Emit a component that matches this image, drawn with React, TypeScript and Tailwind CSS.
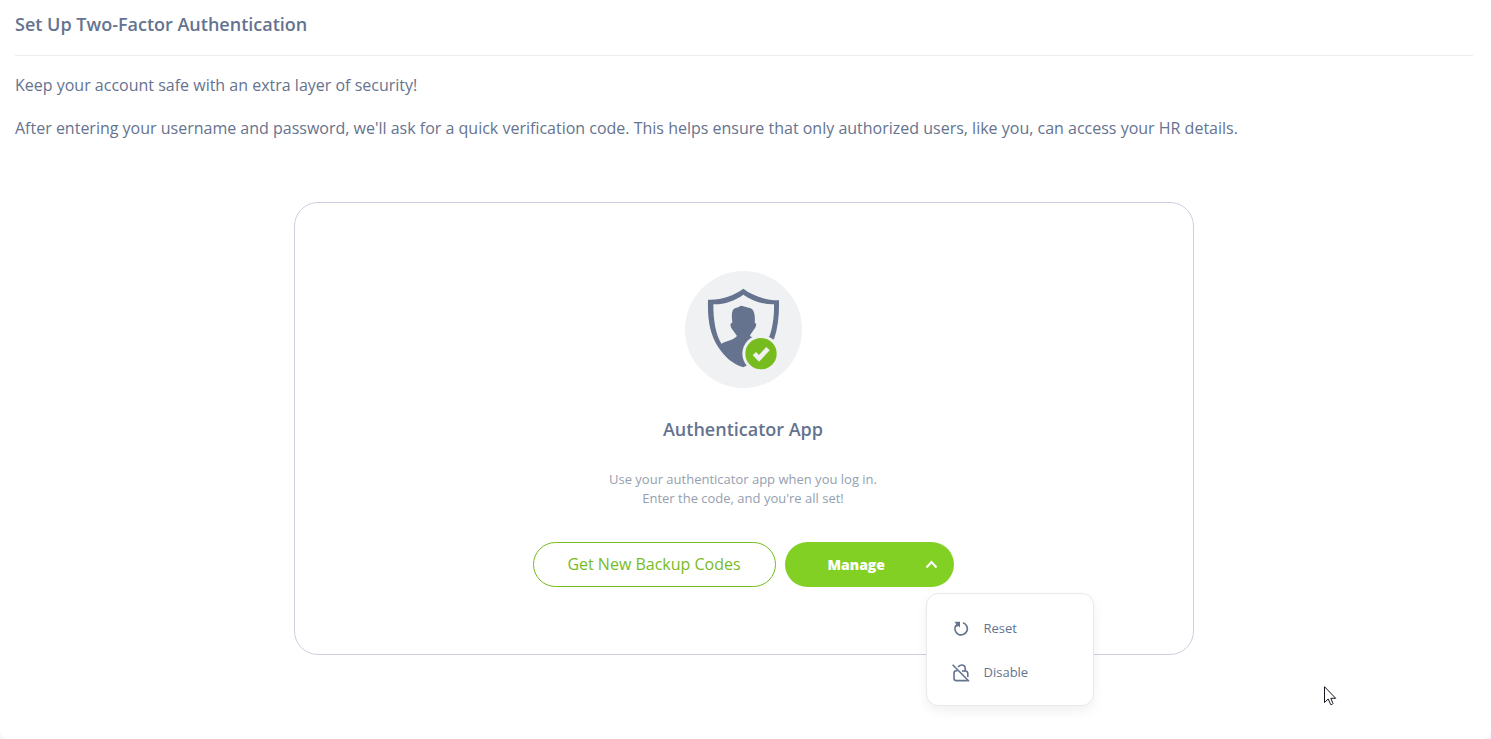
import { useState } from "react";

function ShieldIcon() {
  return (
    <svg viewBox="45 33 351 351" className="size-[117px]" aria-hidden="true">
      <circle cx="220.5" cy="208.5" r="175.5" fill="#eff1f3" />
      <path
        fill="#65738f"
        fillRule="evenodd"
        d="M220 86C190 108 152 121 114 119C112 178 120 222 143 259C163 291 189 313 220 322L243 310L290 245L312 238C324 202 328 164 327 121C289 122 250 108 220 86ZM220 104C193 123 162 134 130 133C130 182 137 222 154 251C168 244 189 241 201 228L186 207C182 202 180 194 183 190L187 188C185 171 184 155 191 147C198 141 207 143 212 137C223 139 234 142 242 145C254 150 256 171 254 188C261 190 259 200 253 207L240 226C241 230 245 232 250 234L298 230C308 203 313 166 312 133C280 134 247 123 220 104Z"
      />
      <circle cx="273" cy="281" r="56" fill="#eff1f3" />
      <circle cx="273" cy="281" r="47" fill="#77bc1f" />
      <path d="M253 281L267 295L294 266" fill="none" stroke="#eff1f3" strokeWidth="14" />
    </svg>
  );
}

function ResetIcon() {
  return (
    <svg viewBox="0 0 18 18" className="size-[18px]" fill="none" aria-hidden="true">
      <path d="M11 2.8A6.2 6.2 0 1 1 4 5.2" stroke="#65738f" strokeWidth="1.7" />
      <path d="M2.3 1.8H8V7.6L6.2 5.9L4.8 7L3.4 5.6L4.3 4Z" fill="#65738f" />
    </svg>
  );
}

function DisableIcon() {
  return (
    <svg viewBox="0 0 18 18" className="size-[18px]" fill="none" stroke="#65738f" strokeWidth="1.6" aria-hidden="true">
      <path d="M.6 .8L17 17.2" />
      <path d="M5.5 6.8H4.4Q2 6.8 2 9.2V14.2Q2 16.6 4.4 16.6H15.8" />
      <path d="M6.2 3.2Q7.2 1 9.6 1Q13.2 1 13.2 4.6V6.8Q15.8 7.2 15.8 9.6V13" />
      <path d="M10 7H13.2" />
    </svg>
  );
}

function Pointer() {
  return (
    <svg viewBox="0 0 13 20" className="absolute left-[1324px] top-[686px] h-5 w-[13px]" aria-hidden="true">
      <path
        d="M.5 .7V16.5L4.2 13L6.7 18.5Q8 19.2 9 17.5L6.8 12.3H11.7Z"
        fill="#fff"
        stroke="#17171f"
        strokeWidth="1"
      />
    </svg>
  );
}

export default function App() {
  const [open, setOpen] = useState(true);
  return (
    <div className="relative min-h-screen bg-[#f6f6fb] font-['Open_Sans',sans-serif] text-[#65738f]">
      <main className="min-h-screen rounded-b-lg bg-white pr-[18px] pl-[15px]">
        <h1 className="border-b border-[#ebecee] pt-3 pb-[18px] text-lg leading-[25px] font-semibold">
          Set Up Two-Factor Authentication
        </h1>
        <div className="flex flex-col gap-[19px] pt-[17px] text-base leading-6 font-medium">
          <p>Keep your account safe with an extra layer of security!</p>
          <p>
            After entering your username and password, we'll ask for a quick verification code. This helps ensure that
            only authorized users, like you, can access your HR details.
          </p>
        </div>
        <section className="mx-auto mt-[62px] flex w-full max-w-[900px] flex-col items-center rounded-3xl border border-[#cfcee0] pt-[68px] pr-[2px] pb-[67px]">
          <ShieldIcon />
          <h2 className="mt-7 text-lg leading-[26px] font-semibold">Authenticator App</h2>
          <p className="mt-7 text-center text-[13px] leading-[19px] text-[#94a0b0]">
            Use your authenticator app when you log in.
            <br />
            Enter the code, and you're all set!
          </p>
          <div className="mt-[34px] flex gap-[9px]">
            <button
              type="button"
              className="h-[45px] w-[243px] rounded-full border border-[#77bc1f] pb-[2px] text-base text-[#77bc1f]"
            >
              Get New Backup Codes
            </button>
            <div className="relative">
              <button
                type="button"
                aria-expanded={open}
                aria-haspopup="menu"
                onClick={() => setOpen(!open)}
                className="flex h-[45px] w-[169px] items-center justify-between rounded-full bg-[#82d024] pr-4 pl-[43px] text-sm font-extrabold text-white"
              >
                Manage
                <svg viewBox="0 0 13 9" className="h-[9px] w-[13px]" fill="none" aria-hidden="true">
                  <path d="M1.5 7.5L6.5 2L11.5 7.5" stroke="#fff" strokeWidth="2" />
                </svg>
              </button>
              {open && (
                <div
                  role="menu"
                  className="absolute top-[51px] left-[141px] flex w-[168px] flex-col rounded-xl border border-[#e8e8ef] bg-white pt-[13px] pb-[10px] text-[13px] shadow-[0_5px_12px_rgba(0,0,0,0.06)]"
                >
                  <button type="button" role="menuitem" className="flex h-11 items-center gap-[14px] pl-[25px]">
                    <ResetIcon />
                    Reset
                  </button>
                  <button type="button" role="menuitem" className="flex h-11 items-center gap-[14px] pl-[25px]">
                    <DisableIcon />
                    Disable
                  </button>
                </div>
              )}
            </div>
          </div>
        </section>
      </main>
      <Pointer />
    </div>
  );
}
